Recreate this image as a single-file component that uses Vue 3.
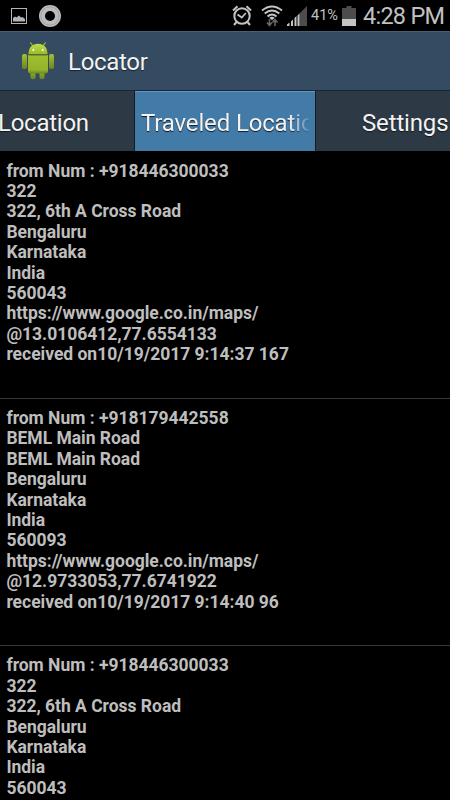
<script setup>
import { ref } from 'vue';

// Tabs of the action bar
const activeTab = ref('traveled');
const tabs = [
  { id: 'location', label: 'Location' },
  { id: 'traveled', label: 'Traveled Location' },
  { id: 'settings', label: 'Settings' }
];

// Received locations
const locations = ref([
  {
    id: 1,
    lines: [
      'from Num : +918446300033',
      '322',
      '322, 6th A Cross Road',
      'Bengaluru',
      'Karnataka',
      'India',
      '560043',
      'https://www.google.co.in/maps/',
      '@13.0106412,77.6554133',
      'received on10/19/2017 9:14:37 167'
    ]
  },
  {
    id: 2,
    lines: [
      'from Num : +918179442558',
      'BEML Main Road',
      'BEML Main Road',
      'Bengaluru',
      'Karnataka',
      'India',
      '560093',
      'https://www.google.co.in/maps/',
      '@12.9733053,77.6741922',
      'received on10/19/2017 9:14:40 96'
    ]
  },
  {
    id: 3,
    lines: [
      'from Num : +918446300033',
      '322',
      '322, 6th A Cross Road',
      'Bengaluru',
      'Karnataka',
      'India',
      '560043'
    ]
  }
]);
</script>

<template>
  <div class="screen">
    <div class="status-bar">
      <svg class="icon-picture" width="16" height="16" viewBox="0 0 16 16">
        <rect x="0.5" y="0.5" width="15" height="15" fill="none" stroke="#b4b4b4" />
        <path d="M2 13.5V10l2-1.5 1.500 1L8 7.500l2 2 1.500-.5L14 11v2.500z" fill="#b4b4b4" />
      </svg>
      <svg class="icon-ring" width="24" height="24" viewBox="0 0 24 24">
        <circle cx="12" cy="12" r="8" fill="none" stroke="#bcbcbc" stroke-width="6" />
        <circle cx="12" cy="12" r="9.2" fill="none" stroke="#979797" stroke-width="0.7" />
      </svg>
      <div class="spacer"></div>
      <svg class="icon-alarm" width="20" height="21" viewBox="0 0 20 21">
        <g fill="none" stroke="#c4c4c4" stroke-width="2">
          <circle cx="10" cy="11" r="7.7" />
          <path d="M1 5.5L5.5 1.2M19 5.5l-4.5-4.3M4.5 17L2 20M15.5 17l2.5 3" />
          <path d="M5.5 9.5l4.3 3 4-4.5" stroke-width="1.7" />
        </g>
      </svg>
      <svg class="icon-wifi" width="22" height="22" viewBox="0 0 22 22">
        <g fill="none" stroke="#c4c4c4" stroke-width="2">
          <path d="M1 5.5Q11-2.5 21 5.500" />
          <path d="M3.700 8.600Q11 2.500 18.300 8.600" />
          <path d="M6.500 11.500Q11 7.500 15.500 11.500" />
        </g>
        <path d="M8.300 12.700q2.700-2 5.400 0L11 15.300z" fill="#c4c4c4" />
        <path d="M8.500 14v6M6 17.500l2.500 3 2.500-3M14 21v-6M11.500 17.500l2.500-3 2.500 3" fill="none" stroke="#666" stroke-width="1.600" />
      </svg>
      <svg class="icon-signal" width="20" height="20" viewBox="0 0 20 20">
        <path d="M12.500 7.500L20 0v20h-7.500z" fill="#4c4c4c" />
        <path d="M0 18.500L2.500 16.500V20H0zM4 15.500l2-2V20H4zM7.500 12l2-2v10h-2zM10.500 9.500l2-2V20h-2z" fill="#c4c4c4" />
      </svg>
      <span class="percent">41%</span>
      <svg class="icon-battery" width="14" height="20" viewBox="0 0 14 20">
        <path d="M4.500 0h5v2H14v18H0V2h4.500z" fill="#4c4c4c" />
        <path d="M0 13h14v7H0z" fill="#c4c4c4" />
      </svg>
      <span class="clock">4:28 PM</span>
    </div>

    <div class="action-bar">
      <svg class="logo" width="32" height="38" viewBox="0 0 32 38">
        <defs>
          <linearGradient id="headShade" x1="0" y1="0" x2="0" y2="1">
            <stop offset="0" stop-color="#c0dc48" />
            <stop offset="1" stop-color="#9aba2c" />
          </linearGradient>
          <linearGradient id="bodyShade" x1="0" y1="0" x2="0" y2="1">
            <stop offset="0" stop-color="#a2bf30" />
            <stop offset="0.8" stop-color="#94b32a" />
            <stop offset="1" stop-color="#6c8a1c" />
          </linearGradient>
          <linearGradient id="limbShade" x1="0" y1="0" x2="0" y2="1">
            <stop offset="0" stop-color="#a4c032" />
            <stop offset="1" stop-color="#6b841e" />
          </linearGradient>
        </defs>
        <path d="M8.7 0.8l2.600 3.700M23.300 0.800L20.700 4.500" stroke="#9cba30" stroke-width="1.200" stroke-linecap="round" />
        <path d="M6.500 12.300C6.500 5 10.500 1.700 16 1.700s9.500 3.300 9.500 10.600z" fill="url(#headShade)" />
        <circle cx="11.300" cy="8" r="1" fill="#fff" />
        <circle cx="20.700" cy="8" r="1" fill="#fff" />
        <rect x="0" y="12" width="5" height="15" rx="1.800" fill="url(#limbShade)" />
        <rect x="27" y="12" width="5" height="15" rx="1.800" fill="url(#limbShade)" />
        <rect x="8.500" y="27" width="5" height="10.200" rx="2" fill="url(#limbShade)" />
        <rect x="17.500" y="27" width="5" height="10.200" rx="2" fill="url(#limbShade)" />
        <path d="M6 13h20v16q0 2.500-2.500 2.500h-15Q6 31.500 6 29z" fill="url(#bodyShade)" />
        <path d="M6.500 13h19" stroke="#57701b" stroke-width="1" />
      </svg>
      <h1 class="title">Locator</h1>
    </div>

    <div class="tabs">
      <button
        v-for="tab in tabs"
        :key="tab.id"
        class="tab"
        :class="[tab.id, { active: tab.id === activeTab }]"
        @click="activeTab = tab.id"
      >
        <span class="tab-label">{{ tab.label }}</span>
      </button>
    </div>

    <ul class="list">
      <li v-for="item in locations" :key="item.id" class="list-item">
        <div v-for="(line, i) in item.lines" :key="i" class="line">{{ line }}</div>
      </li>
    </ul>
  </div>
</template>

<style>
body {
  margin: 0;
  background-color: #000;
}
</style>

<style scoped>
.screen {
  display: flex;
  flex-direction: column;
  width: 450px;
  height: 800px;
  overflow: hidden;
  background-color: #000;
  font-family: Roboto, sans-serif;
}

svg {
  display: block;
  flex: none;
}

/* Status bar */
.status-bar {
  display: flex;
  align-items: center;
  flex: none;
  box-sizing: border-box;
  height: 31px;
  padding: 0 5px 0 11px;
  color: #c0c0c0;
}

.icon-ring {
  margin-left: 11px;
}

.spacer {
  flex: 1;
}

.icon-wifi {
  margin-left: 9px;
}

.icon-signal {
  margin-left: 4px;
}

.percent {
  width: 27px;
  margin-left: 4px;
  font-size: 14.5px;
  white-space: nowrap;
}

.icon-battery {
  margin-left: 4px;
}

.clock {
  width: 82px;
  margin-left: 7px;
  font-size: 23.5px;
  letter-spacing: -0.75px;
  white-space: nowrap;
}

/* Action bar */
.action-bar {
  display: flex;
  align-items: center;
  flex: none;
  box-sizing: border-box;
  height: 59px;
  padding-left: 22px;
  background-color: #344b61;
  border-top: 1px solid #47617b;
}

.title {
  margin: 2px 0 0 14px;
  color: #f3f3f3;
  font-size: 24px;
  font-weight: 400;
  letter-spacing: -0.3px;
  line-height: 30px;
  text-shadow: 0 1px 1px #17232e;
}

/* Tabs */
.tabs {
  display: flex;
  flex: none;
  box-sizing: border-box;
  height: 61px;
  background-color: #2d3944;
  border-top: 1px solid #1b252f;
}

.tab {
  display: flex;
  align-items: center;
  flex: none;
  box-sizing: border-box;
  width: 134px;
  padding: 3px 0 0;
  border: none;
  background-color: transparent;
  color: #f3f3f3;
  font-family: inherit;
  font-size: 24px;
  letter-spacing: -0.15px;
  text-shadow: 0 1px 1px #101820;
  cursor: pointer;
}

.tab.location .tab-label {
  margin-left: -2px;
  letter-spacing: -0.25px;
}

.tab.traveled {
  width: 182px;
  padding: 3px 6px 0 6px;
  border-left: 1px solid #111c25;
  border-right: 1px solid #111c25;
}

.tab.settings {
  padding-left: 46px;
}

.tab.active {
  background-color: #437ba8;
  box-shadow: inset 0 1px #6199c2;
}

.tab-label {
  flex: none;
  white-space: nowrap;
}

.traveled .tab-label {
  width: 168px;
  overflow: hidden;
  text-align: left;
  mask-image: linear-gradient(to right, #000 148px, transparent 170px);
}

/* List */
.list {
  flex: 1;
  min-height: 0;
  margin: 0;
  padding: 0.6px 0 0;
  overflow: hidden;
  list-style: none;
}

.list-item {
  box-sizing: border-box;
  height: 247.4px;
  padding: 9px 6px 0 6.4px;
  border-bottom: 1px solid #383838;
}

.line {
  height: 20.4px;
  color: #bebebe;
  font-size: 17.5px;
  font-weight: 700;
  letter-spacing: -0.02px;
  line-height: 20.4px;
  white-space: nowrap;
}
</style>
